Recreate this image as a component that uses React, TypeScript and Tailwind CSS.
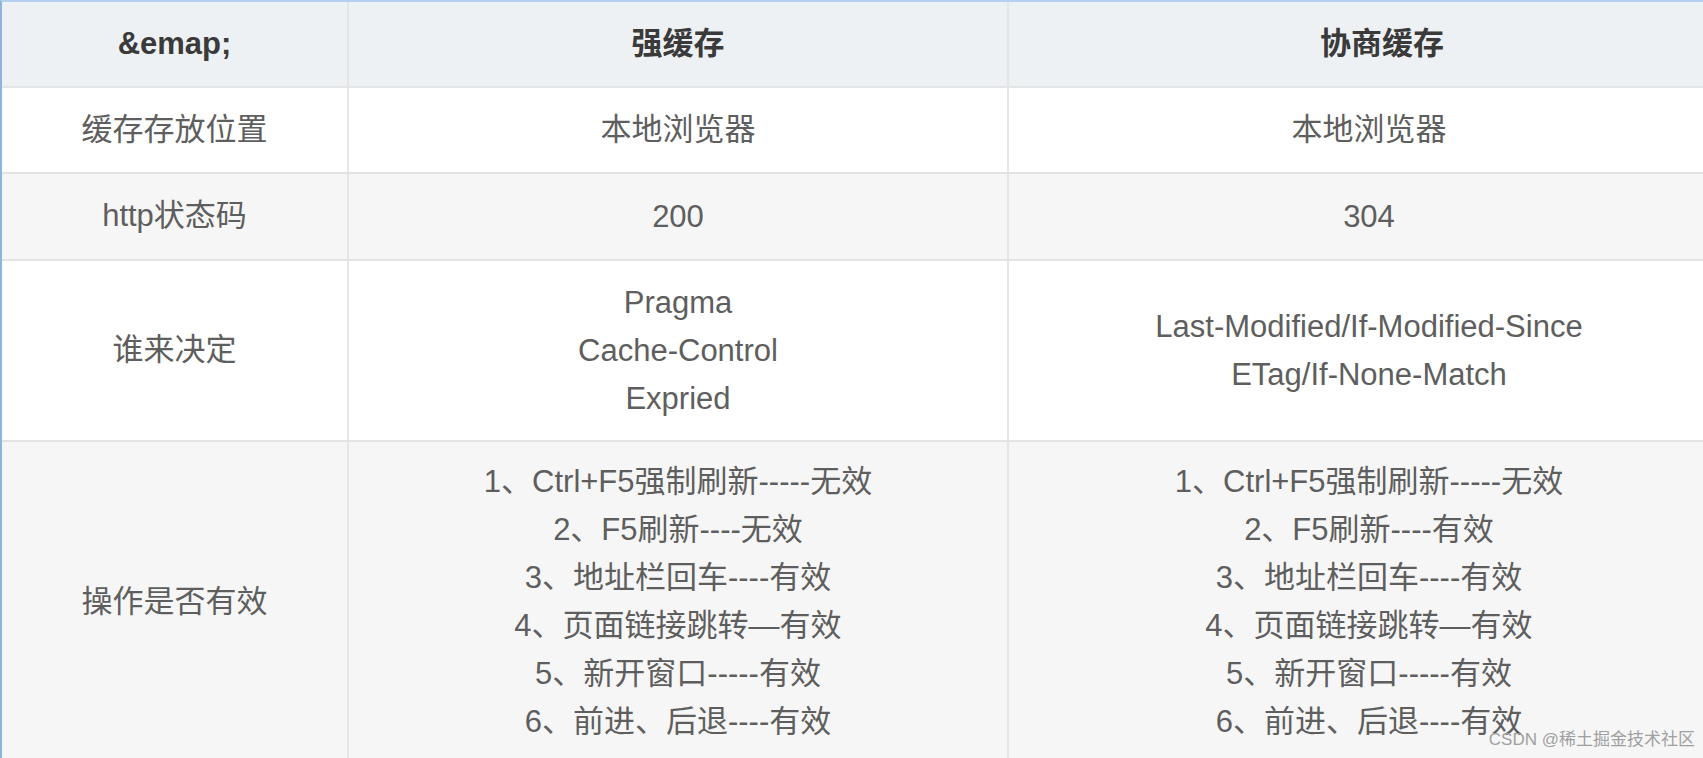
const font = { fontFamily: '"Liberation Sans", "Noto Sans CJK SC", sans-serif' };

type Row = {
  label: string;
  strong: string[];
  nego: string[];
  height: string;
  bg: string;
};

const rows: Row[] = [
  { label: "缓存存放位置", strong: ["本地浏览器"], nego: ["本地浏览器"], height: "h-[86px]", bg: "bg-white" },
  { label: "http状态码", strong: ["200"], nego: ["304"], height: "h-[87px]", bg: "bg-[#f6f6f6]" },
  {
    label: "谁来决定",
    strong: ["Pragma", "Cache-Control", "Expried"],
    nego: ["Last-Modified/If-Modified-Since", "ETag/If-None-Match"],
    height: "h-[181px]",
    bg: "bg-white",
  },
  {
    label: "操作是否有效",
    strong: [
      "1、Ctrl+F5强制刷新-----无效",
      "2、F5刷新----无效",
      "3、地址栏回车----有效",
      "4、页面链接跳转—有效",
      "5、新开窗口-----有效",
      "6、前进、后退----有效",
    ],
    nego: [
      "1、Ctrl+F5强制刷新-----无效",
      "2、F5刷新----有效",
      "3、地址栏回车----有效",
      "4、页面链接跳转—有效",
      "5、新开窗口-----有效",
      "6、前进、后退----有效",
    ],
    height: "h-[320px]",
    bg: "bg-[#f6f6f6]",
  },
];

function Lines({ items }: { items: string[] }) {
  return (
    <div className="flex flex-col items-center">
      {items.map((t) => (
        <div key={t} className="leading-[48px] whitespace-nowrap">
          {t}
        </div>
      ))}
    </div>
  );
}

export default function App() {
  return (
    <div className="relative w-[1703px] h-[758px] overflow-hidden bg-white" style={font}>
      <div className="w-[1729px] border-l-2 border-t-2 border-l-[#8db4dc] border-t-[#b3d1ee] text-[31px] text-[#5e5e5e]">
        {/* cabecera */}
        <div className="flex h-[86px] bg-[#eef1f3] border-b-2 border-[#e2e4e6] font-bold text-[#3a3a3a]">
          <div className="w-[347px] border-r-2 border-[#e2e4e6] flex items-center justify-center">&amp;emap;</div>
          <div className="w-[660px] border-r-2 border-[#e2e4e6] flex items-center justify-center">强缓存</div>
          <div className="flex-1 flex items-center justify-center pl-[26px]">协商缓存</div>
        </div>

        {rows.map((r, i) => (
          <div
            key={r.label}
            className={`flex ${r.height} ${r.bg} ${i < rows.length - 1 ? "border-b-2 border-[#e3e3e3]" : ""}`}
          >
            <div className="w-[347px] border-r-2 border-[#e6e6e6] flex items-center justify-center">{r.label}</div>
            <div className="w-[660px] border-r-2 border-[#e6e6e6] flex items-center justify-center">
              <Lines items={r.strong} />
            </div>
            <div className="flex-1 flex items-center justify-center">
              <Lines items={r.nego} />
            </div>
          </div>
        ))}
      </div>

      {/* marca de agua */}
      <div className="absolute right-[8px] bottom-[8px] text-[17px] leading-[20px] text-[#a0a0a0] whitespace-nowrap">
        CSDN @稀土掘金技术社区
      </div>
    </div>
  );
}
